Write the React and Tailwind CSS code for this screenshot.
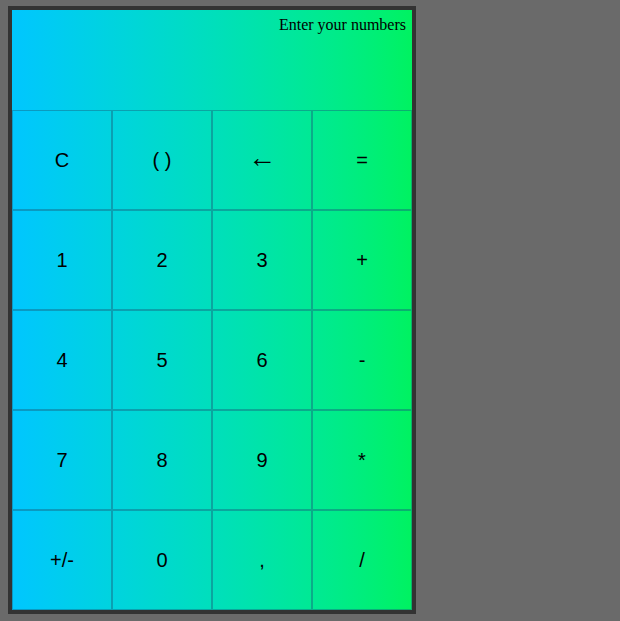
const keys = ["C", "( )", "←", "=", "1", "2", "3", "+", "4", "5", "6", "-", "7", "8", "9", "*", "+/-", "0", ",", "/"];

export default function App() {
    return (
        <div className="min-h-screen bg-[#6a6a6a] pt-[6px] pl-2">
            <div className="w-[408px] border-4 border-[#333333] bg-gradient-to-r from-[#00c6ff] to-[#00f260]">
                {/* display */}
                <div className="h-[100px] px-[6px] pt-[5px] text-right text-[16px] leading-[20px] text-black font-['Liberation_Serif',serif]">
                    Enter your numbers
                </div>
                {/* keypad */}
                <div className="grid grid-cols-4">
                    {keys.map((k) => (
                        <button
                            key={k}
                            className={
                                "h-[100px] border border-[rgba(25,95,125,0.45)] flex items-center justify-center text-black font-['Liberation_Sans',Arial,sans-serif] " +
                                (k === "←" ? "text-[28px] pb-[5px]" : "text-[20px]")
                            }
                        >
                            {k}
                        </button>
                    ))}
                </div>
            </div>
        </div>
    );
}
